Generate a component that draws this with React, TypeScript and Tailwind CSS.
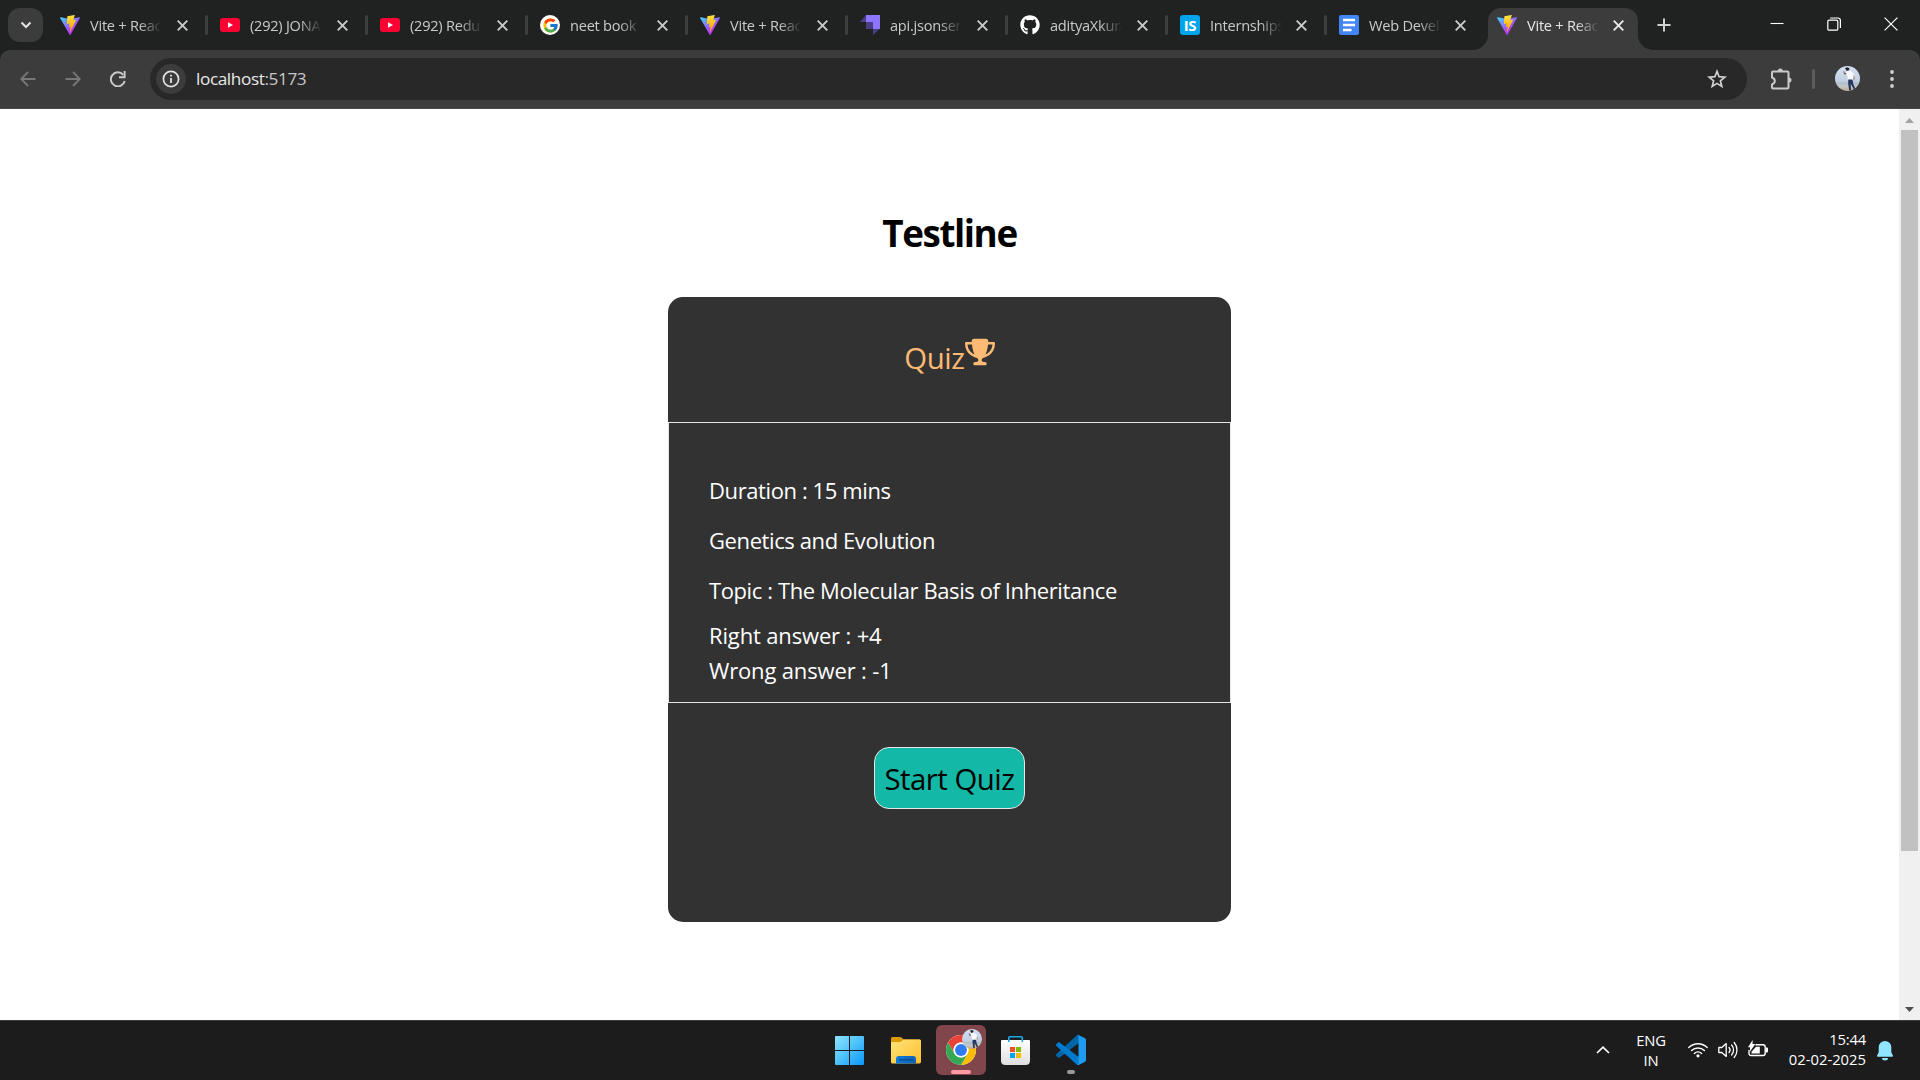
import React from "react";
import { FaTrophy } from "react-icons/fa6";
import { FaGithub } from "react-icons/fa";
import { FcGoogle } from "react-icons/fc";

function ViteIcon({ id }: { id: string }) {
  return (
    <svg viewBox="0 0 256 257" className="h-5 w-5">
      <defs>
        <linearGradient id={id + "a"} x1="-.828%" x2="57.636%" y1="7.652%" y2="78.411%">
          <stop offset="0%" stopColor="#41D1FF" />
          <stop offset="100%" stopColor="#BD34FE" />
        </linearGradient>
        <linearGradient id={id + "b"} x1="43.376%" x2="50.316%" y1="2.242%" y2="89.03%">
          <stop offset="0%" stopColor="#FFEA83" />
          <stop offset="8.333%" stopColor="#FFDD35" />
          <stop offset="100%" stopColor="#FFA800" />
        </linearGradient>
      </defs>
      <path fill={`url(#${id}a)`} d="M255.153 37.938L134.897 252.976c-2.483 4.44-8.862 4.466-11.382.048L.875 37.958c-2.746-4.814 1.371-10.646 6.827-9.67l120.385 21.517a6.537 6.537 0 0 0 2.322-.004l117.867-21.483c5.438-.991 9.574 4.796 6.877 9.62Z" />
      <path fill={`url(#${id}b)`} d="M185.432.063L96.44 17.501a3.268 3.268 0 0 0-2.634 3.014l-5.474 92.456a3.268 3.268 0 0 0 3.997 3.378l24.777-5.718c2.318-.535 4.413 1.507 3.936 3.838l-7.361 36.047c-.495 2.426 1.782 4.5 4.151 3.78l15.304-4.649c2.372-.72 4.652 1.36 4.15 3.788l-11.698 56.621c-.732 3.542 3.979 5.473 5.943 2.437l1.313-2.028l72.516-144.72c1.215-2.423-.88-5.186-3.54-4.672l-25.505 4.922c-2.396.462-4.435-1.77-3.759-4.114l16.646-57.705c.677-2.35-1.37-4.583-3.769-4.113Z" />
    </svg>
  );
}

const YoutubeIcon = () => (
  <svg viewBox="0 0 20 20" className="h-5 w-5">
    <rect x="0" y="3" width="20" height="14" rx="3" fill="#ff0033" />
    <path d="M8 7.2v5.6l5-2.8z" fill="#fff" />
  </svg>
);

const GoogleIcon = () => (
  <div className="flex h-5 w-5 items-center justify-center rounded-full bg-white">
    <FcGoogle className="h-[17px] w-[17px]" />
  </div>
);

const JsonServerIcon = () => (
  <svg viewBox="0 0 20 20" className="h-5 w-5">
    <path d="M0 7 6 0v7z" fill="#4a3f87" />
    <path d="M6 0h14v14h-7V7H6z" fill="#8e75ff" />
    <path d="M6 7h7v7H6z" fill="#4a3f87" />
    <path d="M13 14h6.5L13 20z" fill="#4a3f87" />
  </svg>
);

const InternshalaIcon = () => (
  <div className="flex h-5 w-5 items-center justify-center rounded-[3px] bg-[#00a5ec] text-[15px] leading-5 font-bold tracking-[-0.3px] text-white">IS</div>
);

const DocsIcon = () => (
  <svg viewBox="0 0 20 20" className="h-5 w-5">
    <rect width="20" height="20" rx="2" fill="#4285f4" />
    <path d="M4 5h12M4 10h12M4 15h8.5" stroke="#fff" strokeWidth="2.4" />
  </svg>
);

const CloseX = ({ bright }: { bright?: boolean }) => (
  <svg viewBox="0 0 17 17" className={bright ? "h-[17px] w-[17px] text-[#e8e8e8]" : "h-[17px] w-[17px] text-[#c9cac9]"}>
    <path d="M3.7 3.7l9.6 9.6M13.3 3.7l-9.6 9.6" stroke="currentColor" strokeWidth="1.9" />
  </svg>
);

const Avatar = ({ className, id }: { className: string; id: string }) => (
  <svg viewBox="0 0 25 25" className={className}>
    <defs>
      <linearGradient id={id} x1="0" x2="0" y1="0" y2="1">
        <stop offset="0" stopColor="#d3e0f5" />
        <stop offset="0.6" stopColor="#c3d0e2" />
        <stop offset="0.68" stopColor="#aebfcd" />
        <stop offset="0.82" stopColor="#c5c8c6" />
        <stop offset="1" stopColor="#b9a78d" />
      </linearGradient>
      <clipPath id={id + "c"}>
        <circle cx="12.5" cy="12.5" r="12.5" />
      </clipPath>
    </defs>
    <g clipPath={`url(#${id}c)`}>
      <rect width="25" height="25" fill={`url(#${id})`} />
      <path d="M11.500 5.200l4.500-.2 3 3 .8 5-1.600.4-.4.800-4.800.2-.8-5-1.800-1z" fill="#f8f9fd" />
      <path d="M13.200 13.400h4.300l.8 4.500 2.200 5-1.500.8-3.200-6 .2 6.500-1.800.2-1-6.500z" fill="#26385c" />
      <path d="M10 2l2.800-.8 1.700 1.200-.6 1.800-2.200.8z" fill="#2a211f" />
      <path d="M8.300 5.500l1.200 3.200 2-.8-.5-1-1.300.2-.5-1.800z" fill="#6a4a42" />
      <path d="M18.800 8.500l.9 4-1 1.500-.4-1.500z" fill="#8b6a60" />
    </g>
  </svg>
);

type Tab = { icon: React.ReactNode; title: string; width: string; gap?: string };

const tabs: Tab[] = [
  { icon: <ViteIcon id="v1" />, title: "Vite + Reac", width: "w-40" },
  { icon: <YoutubeIcon />, title: "(292) JONA", width: "w-40" },
  { icon: <YoutubeIcon />, title: "(292) Redux", width: "w-40" },
  { icon: <GoogleIcon />, title: "neet book", width: "w-40" },
  { icon: <ViteIcon id="v2" />, title: "Vite + Reac", width: "w-40" },
  { icon: <JsonServerIcon />, title: "api.jsonserv", width: "w-40" },
  { icon: <FaGithub className="h-5 w-5 text-white" />, title: "adityaXkura", width: "w-40" },
  { icon: <InternshalaIcon />, title: "Internships", width: "w-[159px]", gap: "ml-[11px]" },
  { icon: <DocsIcon />, title: "Web Devel", width: "w-[161px]", gap: "ml-[11px]" },
];

const TabTitle = ({ children, active }: { children: string; active?: boolean }) => (
  <div
    className={
      "ml-2.5 w-[72px] overflow-hidden text-[14.6px] leading-5 tracking-[-0.25px] whitespace-nowrap [mask-image:linear-gradient(to_right,black_68%,transparent)] " +
      (active ? "text-[#e6e6e6]" : "text-[#c9cac9]")
    }
  >
    {children}
  </div>
);

function TabStrip() {
  return (
    <div className="flex h-[50px] items-start bg-[#202221]">
      <div className="mt-2 ml-2 flex h-[34px] w-[35px] items-center justify-center rounded-xl bg-[#3c3c3c]">
        <svg viewBox="0 0 12 8" className="h-2 w-3">
          <path d="M1.5 1.5L6 6l4.500-4.500" fill="none" stroke="#e3e3e3" strokeWidth="2" />
        </svg>
      </div>
      <div className="ml-[5px] flex">
        {tabs.map((t, i) => (
          <div key={i} className={"flex h-[50px] items-center pl-3 " + t.width}>
            {t.icon}
            <TabTitle>{t.title}</TabTitle>
            <div className={t.gap ?? "ml-3"}>
              <CloseX />
            </div>
            {i < tabs.length - 1 && <div className="ml-auto h-5 w-[3px] rounded-full bg-[#3d3e3e]" />}
          </div>
        ))}
      </div>
      <div className="relative mt-2 flex h-[42px] w-[150px] items-center rounded-t-[13px] bg-[#3c3c3c] pb-2 pl-[9px]">
        <svg viewBox="0 0 15 15" className="absolute bottom-0 -left-[15px] h-[15px] w-[15px]">
          <path d="M15 0v15H0A15 15 0 0 0 15 0z" fill="#3c3c3c" />
        </svg>
        <svg viewBox="0 0 15 15" className="absolute -right-[15px] bottom-0 h-[15px] w-[15px]">
          <path d="M0 0v15h15A15 15 0 0 1 0 0z" fill="#3c3c3c" />
        </svg>
        <ViteIcon id="v3" />
        <TabTitle active>Vite + Reac</TabTitle>
        <div className="ml-[11px]">
          <CloseX bright />
        </div>
      </div>
      <svg viewBox="0 0 14 14" className="mt-[18px] ml-[19px] h-3.5 w-3.5">
        <path d="M7 .5v13M.5 7h13" stroke="#cfd0cf" strokeWidth="2" />
      </svg>
      <div className="mt-[17px] mr-[22px] ml-auto flex items-center gap-[43px]">
        <svg viewBox="0 0 14 14" className="h-3.5 w-3.5">
          <path d="M.5 6.500h13" stroke="#fff" strokeWidth="1.1" />
        </svg>
        <svg viewBox="0 0 14 14" className="h-3.5 w-3.5" fill="none" stroke="#fff" strokeWidth="1.2">
          <rect x=".8" y="3.200" width="10" height="10" rx="1.300" />
          <path d="M3.200 1h7.600a2.600 2.600 0 0 1 2.600 2.600v7.400" />
        </svg>
        <svg viewBox="0 0 14 14" className="h-3.5 w-3.5">
          <path d="M.6.6l12.800 12.800M13.400.6L.6 13.400" stroke="#fff" strokeWidth="1.200" />
        </svg>
      </div>
    </div>
  );
}

function Toolbar() {
  return (
    <div className="bg-[#202221]">
      <div className="flex h-[59px] items-start rounded-t-[10px] border-b border-[#4a4646] bg-[#3c3c3c] pt-2">
        <div className="flex h-[41px] items-center">
          <svg viewBox="0 0 16 16" className="ml-5 h-4 w-4" fill="none" stroke="#777777" strokeWidth="1.800">
            <path d="M15.500 8H1.500M8 1L1.200 8 8 15" />
          </svg>
          <svg viewBox="0 0 16 16" className="ml-[29px] h-4 w-4" fill="none" stroke="#777777" strokeWidth="1.800">
            <path d="M.5 8h14M8 1l6.800 7L8 15" />
          </svg>
          <svg viewBox="0 0 16 16" className="ml-[29px] h-4 w-4" fill="none" stroke="#c9c9c9" strokeWidth="2">
            <path d="M13.200 3.800A7 7 0 1 0 14.700 10" />
            <path d="M14.600 0v6.200H9" />
          </svg>
        </div>
        <div className="ml-6 flex h-[42px] w-[1597px] items-center rounded-full bg-[#282828] pr-5 pl-1.5">
          <div className="flex h-[30px] w-[30px] items-center justify-center rounded-full bg-[#3c3c3c]">
            <svg viewBox="0 0 18 18" className="h-[18px] w-[18px]">
              <circle cx="9" cy="9" r="7.600" fill="none" stroke="#e3e3e3" strokeWidth="1.700" />
              <path d="M9 8v5M9 4.800v1.700" stroke="#e3e3e3" strokeWidth="1.800" />
            </svg>
          </div>
          <div className="ml-2.5 text-[17.2px] leading-6 tracking-[-0.4px] text-[#e8e8e8]">
            localhost<span className="text-[#c7c7c7]">:5173</span>
          </div>
          <svg viewBox="0 0 20 20" className="ml-auto h-5 w-5" fill="none" stroke="#d0d0d0" strokeWidth="1.700">
            <path d="M10 2.400l2.100 5.300 5.700.4-4.400 3.700 1.400 5.700L10 14.400l-4.800 3.100 1.400-5.700L2.200 8.100l5.700-.4z" />
          </svg>
        </div>
        <div className="ml-[23px] flex h-[41px] items-center">
          <svg viewBox="0 0 22 22" className="h-[22px] w-[22px]" fill="none" stroke="#c9c9c9" strokeWidth="2">
            <path d="M2 4.500q0-1 1-1h14.500q1 0 1 1v15q0 1-1 1H3q-1 0-1-1V16.500q2.800-1.200 2.800-3.500T2 9.500z" strokeLinejoin="round" />
            <path d="M7.800 3a2.500 2.500 0 0 1 5 0zM19 9.500a2.500 2.500 0 0 1 0 5z" fill="#c9c9c9" stroke="none" />
          </svg>
          <div className="ml-5 h-5 w-[3px] rounded-full bg-[#5c5c5c]" />
          <Avatar className="ml-5 h-[25px] w-[25px]" id="av1" />
          <svg viewBox="0 0 4 18" className="ml-[30px] h-[18px] w-1" fill="#cfcfcf">
            <circle cx="2" cy="2" r="1.900" />
            <circle cx="2" cy="9" r="1.900" />
            <circle cx="2" cy="16" r="1.900" />
          </svg>
        </div>
      </div>
    </div>
  );
}

function QuizPage() {
  return (
    <main className="flex flex-1 flex-col items-center bg-white pt-[102px]">
      <h1 className="text-[36.8px] leading-[45px] font-bold tracking-[-1.4px] text-black">Testline</h1>
      <section className="mt-[41px] h-[625px] w-[563px] rounded-[15px] bg-[#323232]">
        <div className="flex h-[125px] items-start justify-center pt-[39px] text-[#fdba74]">
          <div className="text-[29.4px] leading-[45px] tracking-[-0.45px]">Quiz</div>
          <FaTrophy className="mt-px h-[30px] w-[30px]" />
        </div>
        <div className="h-[281px] border border-gray-200 pt-[50px] pl-10 text-[22px] leading-[35px] tracking-[-0.4px] text-white">
          <p>Duration : 15 mins</p>
          <p className="mt-[15px]">Genetics and Evolution</p>
          <p className="mt-[15px]">Topic : The Molecular Basis of Inheritance</p>
          <p className="mt-2.5 tracking-[-0.15px]">Right answer : +4</p>
          <p className="tracking-[-0.15px]">Wrong answer : -1</p>
        </div>
        <div className="flex justify-center pt-11">
          <button className="h-[62px] w-[151px] rounded-[15px] border border-gray-200 bg-[#14b8a6] pt-0.5 text-[29.4px] leading-[45px] tracking-[-0.5px] whitespace-nowrap text-black">
            Start Quiz
          </button>
        </div>
      </section>
    </main>
  );
}

function Scrollbar() {
  return (
    <div className="flex w-[21px] flex-col items-center bg-[#f0f0f0]">
      <svg viewBox="0 0 9 5" className="mt-[9px] h-[5px] w-[9px]">
        <path d="M4.500 0L9 5H0z" fill="#a3a3a3" />
      </svg>
      <div className="mt-[7px] h-[721px] w-[17px] bg-[#c1c1c1]" />
      <svg viewBox="0 0 9 5" className="mt-auto mb-2 h-[5px] w-[9px]">
        <path d="M4.500 5L9 0H0z" fill="#505050" />
      </svg>
    </div>
  );
}

const WindowsIcon = () => (
  <svg viewBox="0 0 29 29" className="mr-[3px] h-[29px] w-[29px]">
    <defs>
      <linearGradient id="win" x1="0" y1="0" x2="1" y2="1">
        <stop offset="0" stopColor="#8fe3ff" />
        <stop offset="0.5" stopColor="#4cc2fb" />
        <stop offset="1" stopColor="#0a96fb" />
      </linearGradient>
    </defs>
    <path fill="url(#win)" d="M1 0h13v14H0V1q0-1 1-1zM15 0h13q1 0 1 1v13H15zM0 15h14v14H1q-1 0-1-1zM15 15h14v13q0 1-1 1H15z" />
  </svg>
);

const FolderIcon = () => (
  <svg viewBox="0 0 30 27" className="h-[27px] w-[30px]">
    <defs>
      <linearGradient id="fold" x1="0" y1="0" x2="1" y2="1">
        <stop offset="0" stopColor="#ffe37a" />
        <stop offset="1" stopColor="#ffc02c" />
      </linearGradient>
      <linearGradient id="foldb" x1="0" y1="0" x2="1" y2="0">
        <stop offset="0" stopColor="#0f7ad8" />
        <stop offset="1" stopColor="#0f61b5" />
      </linearGradient>
    </defs>
    <path d="M0 1.500Q0 0 1.500 0H9q1 0 2 1l1.800 1.500H28.500Q30 2.500 30 4v4H0z" fill="#dc9b05" />
    <path d="M0 6q0-1 1-1h8.500l3-2.500h16Q30 2.500 30 4v20.500Q30 26.500 28.500 26.500h-27Q0 26.500 0 25z" fill="url(#fold)" />
    <path d="M5 26.500V22q0-3 3-3h14q3 0 3 3v4.500z" fill="url(#foldb)" />
    <path d="M8 22.800h14" stroke="#0b4589" strokeWidth="1.200" />
  </svg>
);

const ChromeIcon = () => (
  <svg viewBox="0 0 48 48" className="h-[30px] w-[30px]">
    <circle cx="24" cy="24" r="24" fill="#fff" />
    <path d="M3.220 12A24 24 0 0 1 44.780 12H24A12 12 0 0 0 13.610 30z" fill="#ea4335" />
    <path d="M44.780 12A24 24 0 0 1 24 48L34.390 30A12 12 0 0 0 24 12z" fill="#fbbc04" />
    <path d="M24 48A24 24 0 0 1 3.220 12L13.610 30A12 12 0 0 0 34.390 30z" fill="#34a853" />
    <circle cx="24" cy="24" r="12" fill="#fff" />
    <circle cx="24" cy="24" r="9.500" fill="#2f7bf0" />
  </svg>
);

const StoreIcon = () => (
  <svg viewBox="0 0 29 29" className="mr-px h-[29px] w-[29px]">
    <defs>
      <linearGradient id="store" x1="0" y1="0" x2="0" y2="1">
        <stop offset="0" stopColor="#ffffff" />
        <stop offset="1" stopColor="#dedede" />
      </linearGradient>
    </defs>
    <path d="M0 5q0-1 1-1h27q1 0 1 1v19.500q0 4.500-4.500 4.500h-20Q0 29 0 24.500z" fill="url(#store)" />
    <path d="M7.800 6V1.800q0-1 1-1h11.500q1 0 1 1V6" fill="none" stroke="#1ba9e8" strokeWidth="1.600" />
    <path d="M9 11h5v5H9z" fill="#f25022" />
    <path d="M15 11h5v5h-5z" fill="#7fba00" />
    <path d="M9 17h5v5H9z" fill="#00a4ef" />
    <path d="M15 17h5v5h-5z" fill="#ffb900" />
  </svg>
);

const VsCodeIcon = () => (
  <svg viewBox="0 0 100 100" className="h-[30px] w-[30px]">
    <path fill="#0065A9" d="M96.461 10.796L75.857.876C73.472-.273 70.622.212 68.750 2.083L1.299 63.583c-1.815 1.654-1.812 4.511.004 6.162l5.510 5.009c1.485 1.350 3.722 1.450 5.321.237L93.361 13.370C96.086 11.303 100 13.246 100 16.667v-.240c0-2.401-1.375-4.589-3.539-5.631z" />
    <path fill="#007ACC" d="M96.461 89.204L75.857 99.125c-2.385 1.148-5.235.664-7.107-1.208L1.299 36.417c-1.815-1.654-1.812-4.511.004-6.162l5.510-5.009c1.485-1.350 3.722-1.450 5.321-.237l81.227 61.621C96.086 88.697 100 86.754 100 83.333v.240c0 2.400-1.375 4.589-3.539 5.631z" />
    <path fill="#1F9CF0" d="M75.858 99.126c-2.386 1.148-5.236.663-7.108-1.209C71.056 100.223 75 98.590 75 95.328V4.672C75 1.410 71.056-.223 68.750 2.083 70.622.211 73.472-.274 75.858.874l20.601 9.907C98.623 11.822 100 14.011 100 16.413v67.174c0 2.402-1.377 4.592-3.541 5.633z" />
  </svg>
);

function Tile({ children, active, mark }: { children: React.ReactNode; active?: boolean; mark?: React.ReactNode }) {
  return (
    <div className={"relative flex h-[50px] w-[50px] items-center justify-center rounded-[6px] " + (active ? "bg-[#80464c]" : "")}>
      {children}
      {mark}
    </div>
  );
}

function Taskbar() {
  return (
    <footer className="flex h-[60px] items-start border-t border-[#3a3a3a] bg-[#1c1c1c] text-[14.8px] leading-5 text-white">
      <div className="mt-1 ml-[826px] flex gap-[5px]">
        <Tile><WindowsIcon /></Tile>
        <Tile><FolderIcon /></Tile>
        <Tile active mark={<div className="absolute bottom-px h-1 w-5 rounded-full bg-[#ff99a4]" />}>
          <ChromeIcon />
          <Avatar className="absolute top-1 right-1 h-5 w-5" id="av2" />
        </Tile>
        <Tile><StoreIcon /></Tile>
        <Tile mark={<div className="absolute bottom-px h-1 w-2 rounded-full bg-[#999999]" />}>
          <VsCodeIcon />
        </Tile>
      </div>
      <div className="mr-[27px] ml-auto flex h-[59px] items-start">
        <svg viewBox="0 0 14 8" className="mt-[25px] h-2 w-3.5">
          <path d="M1 7l6-5.800L13 7" fill="none" stroke="#fff" strokeWidth="1.700" />
        </svg>
        <div className="mt-[9px] ml-[26px] w-[30px] text-center tracking-[-0.2px]">
          <div>ENG</div>
          <div>IN</div>
        </div>
        <svg viewBox="0 0 20 16" className="mt-[21px] ml-[22px] h-4 w-5" fill="none" stroke="#fff" strokeWidth="1.400" strokeLinecap="round">
          <path d="M.8 5.600a13 13 0 0 1 18.400 0M3.600 8.600a9 9 0 0 1 12.800 0M6.400 11.400a5 5 0 0 1 7.200 0" />
          <circle cx="10" cy="13.800" r="1.600" fill="#fff" stroke="none" />
        </svg>
        <svg viewBox="0 0 20 18" className="mt-5 ml-2.5 h-[18px] w-5" fill="none" stroke="#fff" strokeWidth="1.300" strokeLinecap="round" strokeLinejoin="round">
          <path d="M.8 6.500h3L8.200 2.600v12.800L3.800 11.500h-3z" />
          <path d="M11 6.400a4 4 0 0 1 0 5.200M13.600 4a7.500 7.500 0 0 1 0 10M16.200 1.500a11.500 11.500 0 0 1 0 15" />
        </svg>
        <svg viewBox="0 0 21 17" className="mt-[19px] ml-2.5 h-[17px] w-[21px]">
          <path d="M7.500 4.700h7.500q2.200 0 2.200 2.200v6.400q0 2.200-2.200 2.200H3.200Q1 15.500 1 13.300V10" fill="none" stroke="#fff" strokeWidth="1.400" />
          <path d="M8 6.800h3.800v6.600H3.500v-1.600z" fill="#fff" />
          <path d="M18 7.500h1q1 0 1 1v3q0 1-1 1h-1z" fill="#fff" />
          <path d="M4.600 0v4h2.800L2 11.500V7.200H0z" fill="#fff" />
        </svg>
        <div className="mt-2 ml-[17px] w-[80px] text-right">
          <div className="tracking-[-0.2px]">15:44</div>
          <div>02-02-2025</div>
        </div>
        <svg viewBox="0 0 16 20" className="mt-5 ml-[11px] h-5 w-4" fill="#8fe4ff">
          <path d="M8 0a6.300 6.300 0 0 1 6.300 6.300v5l1.700 3.500q.2 1-.8 1H.8q-1 0-.8-1l1.700-3.500v-5A6.300 6.300 0 0 1 8 0z" />
          <path d="M5 17h6a3 2.500 0 0 1-6 0z" />
        </svg>
      </div>
    </footer>
  );
}

export default function App() {
  return (
    <div className="flex h-[1080px] w-[1920px] flex-col overflow-hidden bg-white font-['Open_Sans',sans-serif]">
      <TabStrip />
      <Toolbar />
      <div className="flex flex-1">
        <QuizPage />
        <Scrollbar />
      </div>
      <Taskbar />
    </div>
  );
}
